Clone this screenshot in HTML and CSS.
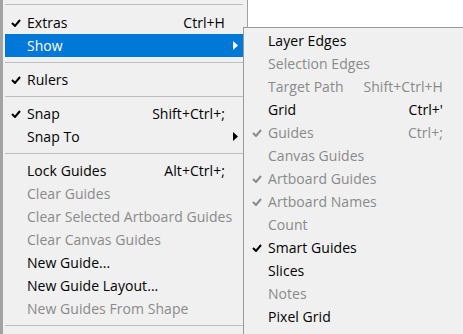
FILE: index.html
```html
<!DOCTYPE html>
<html>
<head>
<meta charset="utf-8">
<link rel="stylesheet" href="styles.css">
</head>
<body>
<div class="screen">
  <div class="menu main">
    <div class="sep first"></div>
    <div class="item"><span class="check"><svg viewBox="0 0 10 8" width="10" height="8"><path d="M1 4 L4 7 L9 1" /></svg></span><span class="label">Extras</span><span class="key">Ctrl+H</span></div>
    <div class="item active"><span class="check"></span><span class="label">Show</span><span class="arrow"><svg viewBox="0 0 5 9" width="5" height="9"><polygon points="0,0 5,4.5 0,9" /></svg></span></div>
    <div class="sep"></div>
    <div class="item"><span class="check"><svg viewBox="0 0 10 8" width="10" height="8"><path d="M1 4 L4 7 L9 1" /></svg></span><span class="label">Rulers</span></div>
    <div class="sep"></div>
    <div class="item"><span class="check"><svg viewBox="0 0 10 8" width="10" height="8"><path d="M1 4 L4 7 L9 1" /></svg></span><span class="label">Snap</span><span class="key">Shift+Ctrl+;</span></div>
    <div class="item"><span class="check"></span><span class="label">Snap To</span><span class="arrow"><svg viewBox="0 0 5 9" width="5" height="9"><polygon points="0,0 5,4.5 0,9" /></svg></span></div>
    <div class="sep"></div>
    <div class="item"><span class="check"></span><span class="label">Lock Guides</span><span class="key">Alt+Ctrl+;</span></div>
    <div class="item off"><span class="check"></span><span class="label">Clear Guides</span></div>
    <div class="item off"><span class="check"></span><span class="label">Clear Selected Artboard Guides</span></div>
    <div class="item off"><span class="check"></span><span class="label">Clear Canvas Guides</span></div>
    <div class="item"><span class="check"></span><span class="label">New Guide...</span></div>
    <div class="item"><span class="check"></span><span class="label">New Guide Layout...</span></div>
    <div class="item off"><span class="check"></span><span class="label">New Guides From Shape</span></div>
    <div class="sep"></div>
  </div>
  <div class="menu sub">
    <div class="item"><span class="check"></span><span class="label">Layer Edges</span></div>
    <div class="item off"><span class="check"></span><span class="label">Selection Edges</span></div>
    <div class="item off"><span class="check"></span><span class="label">Target Path</span><span class="key">Shift+Ctrl+H</span></div>
    <div class="item"><span class="check"></span><span class="label">Grid</span><span class="key">Ctrl+'</span></div>
    <div class="item off"><span class="check"><svg viewBox="0 0 10 8" width="10" height="8"><path d="M1 4 L4 7 L9 1" /></svg></span><span class="label">Guides</span><span class="key">Ctrl+;</span></div>
    <div class="item off"><span class="check"></span><span class="label">Canvas Guides</span></div>
    <div class="item off"><span class="check"><svg viewBox="0 0 10 8" width="10" height="8"><path d="M1 4 L4 7 L9 1" /></svg></span><span class="label">Artboard Guides</span></div>
    <div class="item off"><span class="check"><svg viewBox="0 0 10 8" width="10" height="8"><path d="M1 4 L4 7 L9 1" /></svg></span><span class="label">Artboard Names</span></div>
    <div class="item off"><span class="check"></span><span class="label">Count</span></div>
    <div class="item"><span class="check"><svg viewBox="0 0 10 8" width="10" height="8"><path d="M1 4 L4 7 L9 1" /></svg></span><span class="label">Smart Guides</span></div>
    <div class="item"><span class="check"></span><span class="label">Slices</span></div>
    <div class="item off"><span class="check"></span><span class="label">Notes</span></div>
    <div class="item"><span class="check"></span><span class="label">Pixel Grid</span></div>
  </div>
</div>
</body>
</html>
```
FILE: styles.css
```css
html, body {
  margin: 0;
  padding: 0;
  background: #ffffff;
}
.screen {
  position: relative;
  width: 463px;
  height: 334px;
  overflow: hidden;
  font-family: "Open Sans", "Noto Sans", sans-serif;
  font-size: 14px;
  letter-spacing: 0.05px;
  color: #000;
}
.menu {
  background: #f0f0f0;
  box-sizing: border-box;
}
.main {
  width: 248px;
  height: 334px;
  border-left: 3px solid #a3a3a3;
  border-right: 1px solid #a0a0a0;
  padding: 0 4px 0 2px;
}
.sub {
  position: absolute;
  left: 243px;
  top: 27px;
  right: 0;
  bottom: 0;
  border-top: 1px solid #9a9a9a;
  border-left: 1px solid #9a9a9a;
  padding: 1px 20px 0 2px;
}
.item {
  display: flex;
  align-items: center;
  height: 23px;
  white-space: nowrap;
}
.item.off {
  color: #8a8a8a;
}
.item.active {
  background: #0078d7;
  color: #fff;
}
.check {
  width: 22px;
  flex: none;
  display: flex;
  justify-content: center;
  box-sizing: border-box;
}
.check svg {
  display: block;
}
.check path {
  fill: none;
  stroke: currentColor;
  stroke-width: 2;
}
.label {
  flex: 1;
}
.key {
  padding-right: 18px;
}
.sub .key {
  padding-right: 0;
}
.arrow {
  display: flex;
  padding-right: 5px;
}
.arrow polygon {
  fill: currentColor;
}
.sep {
  height: 11px;
  display: flex;
  align-items: center;
}
.sep::after {
  content: "";
  display: block;
  width: 100%;
  height: 1px;
  background: #bdbdbd;
}
.sep.first {
  align-items: flex-start;
  padding-top: 4px;
  box-sizing: border-box;
}
```
